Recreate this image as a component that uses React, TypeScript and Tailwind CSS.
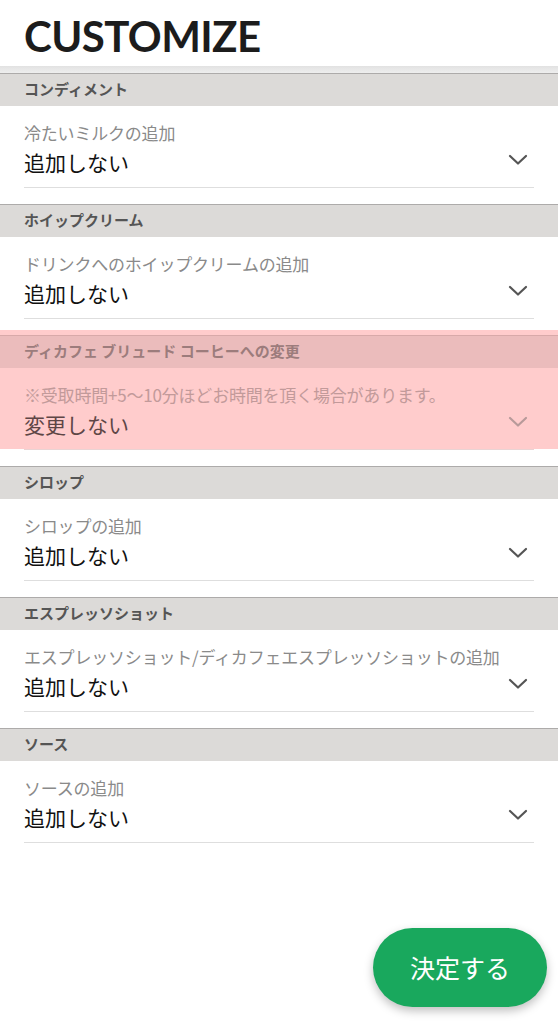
import React from 'react';

const jp = { fontFamily: '"Noto Sans CJK JP", "Noto Sans", sans-serif' };

interface SectionProps {
  title: string;
  label: string;
  value: string;
  disabled?: boolean;
}

const Chevron: React.FC<{ color: string }> = ({ color }) => (
  <svg width="20" height="12" viewBox="0 0 20 12" fill="none" className="mr-[6px] mt-[-4px]">
    <path d="M2 2l8 7.5L18 2" stroke={color} strokeWidth="2.2" strokeLinecap="round" strokeLinejoin="round" />
  </svg>
);

const Section: React.FC<SectionProps> = ({ title, label, value, disabled }) => (
  <div className="relative">
    {disabled && <div className="absolute left-0 right-0 -top-[5px] h-[5px] bg-[#ffcccc]" />}
    <div
      className={`h-[33px] border-t px-6 flex items-center text-[15px] font-bold pb-[2px] ${
        disabled ? 'bg-[#ebbcbc] border-[#d8a9a9] text-[#9c7c7c]' : 'bg-[#dcdad8] border-[#adabaa] text-[#555]'
      }`}
    >
      {title}
    </div>
    <div className={disabled ? 'bg-[#ffcccc]' : 'bg-white'}>
      <div className="px-6 pt-[15px] pb-[10px]">
        <div className={`text-[17px] leading-[24px] tracking-[-0.2px] ${disabled ? 'text-[#c29a9a]' : 'text-[#8a8a8a]'}`}>
          {label}
        </div>
        <div className="flex items-center justify-between mt-[2px]">
          <div className={`text-[21px] leading-[30px] ${disabled ? 'text-[#5e4646]' : 'text-[#111]'}`}>{value}</div>
          <Chevron color={disabled ? '#b89a9a' : '#555'} />
        </div>
      </div>
    </div>
    <div className={`mx-6 h-px ${disabled ? 'bg-[#ead3d3]' : 'bg-[#dedede]'}`} />
    <div className="h-4 bg-white" />
  </div>
);

const sections: SectionProps[] = [
  { title: 'コンディメント', label: '冷たいミルクの追加', value: '追加しない' },
  { title: 'ホイップクリーム', label: 'ドリンクへのホイップクリームの追加', value: '追加しない' },
  {
    title: 'ディカフェ ブリュード コーヒーへの変更',
    label: '※受取時間+5〜10分ほどお時間を頂く場合があります。',
    value: '変更しない',
    disabled: true,
  },
  { title: 'シロップ', label: 'シロップの追加', value: '追加しない' },
  { title: 'エスプレッソショット', label: 'エスプレッソショット/ディカフェエスプレッソショットの追加', value: '追加しない' },
  { title: 'ソース', label: 'ソースの追加', value: '追加しない' },
];

export default function App() {
  return (
    <div className="relative min-h-[1024px] bg-white" style={jp}>
      <header className="h-[66px] px-6 flex items-center bg-white">
        <h1
          className="text-[42px] font-bold tracking-[-0.6px] text-[#1c1c1c] leading-none mt-[6px]"
          style={{ fontFamily: 'Lato, "Noto Sans", sans-serif' }}
        >
          CUSTOMIZE
        </h1>
      </header>
      <div className="h-[7px] bg-gradient-to-b from-[#e2e2e2] to-[#eeeeee]" />
      {sections.map((s) => (
        <Section key={s.title} {...s} />
      ))}
      <button className="absolute left-[373px] top-[928px] w-[174px] h-[79px] rounded-full bg-[#19a85d] text-white text-[25px] shadow-[0_4px_10px_rgba(0,0,0,0.25)]">
        決定する
      </button>
    </div>
  );
}
